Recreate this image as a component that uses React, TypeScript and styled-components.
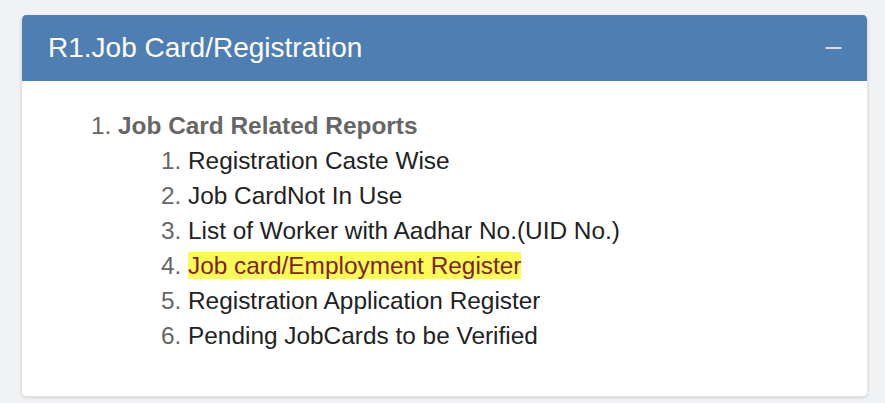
import React from 'react'
import { createGlobalStyle, styled } from 'styled-components'

const GlobalStyle = createGlobalStyle`
  html, body {
    margin: 0;
    padding: 0;
    background: #f1f2f4;
    font-family: "Liberation Sans", Arial, sans-serif;
  }
`;

const Page = styled.div`
  padding: 15px 17px 7px 21px;
`;

const Card = styled.section`
  background: #fff;
  border: 1px solid #dfe1e4;
  border-top: none;
  border-radius: 5px;
  box-shadow: 0 1px 3px rgba(0, 0, 0, 0.12);
  overflow: hidden;
`;

const Header = styled.header`
  height: 66px;
  background: #4f7eb2;
  display: flex;
  align-items: center;
  justify-content: space-between;
  padding: 0 25px 0 26px;
  color: #fff;
`;

const Title = styled.h3`
  margin: 0;
  font-size: 28px;
  font-weight: normal;
  line-height: 32px;
`;

const Collapse = styled.button`
  background: none;
  border: none;
  padding: 0;
  display: flex;
  cursor: pointer;
`;

const Body = styled.div`
  padding: 27px 0 43px;
`;

const OuterList = styled.ol`
  margin: 0;
  padding-left: 96px;
  font-size: 24.4px;
  line-height: 35px;
  color: #666;
`;

const Heading = styled.b`
  color: #666;
`;

const InnerList = styled.ol`
  margin: 0;
  padding-left: 70px;
`;

const Item = styled.li`
  &::marker {
    color: #666;
  }
`;

const ItemText = styled.span<{ $active?: boolean }>`
  color: ${p => (p.$active ? '#7d2328' : '#222')};
  background: ${p => (p.$active ? '#fbfb55' : 'transparent')};
`;

const reports = [
  'Registration Caste Wise',
  'Job CardNot In Use',
  'List of Worker with Aadhar No.(UID No.)',
  'Job card/Employment Register',
  'Registration Application Register',
  'Pending JobCards to be Verified',
];

export default function App() {
  return (
    <>
      <GlobalStyle />
      <Page>
        <Card>
          <Header>
            <Title>R1.Job Card/Registration</Title>
            <Collapse aria-label="collapse">
              <svg width="17" height="4" viewBox="0 0 17 4">
                <line x1="0.5" y1="2" x2="16.5" y2="2" stroke="#fff" strokeWidth="1.6" />
              </svg>
            </Collapse>
          </Header>
          <Body>
            <OuterList>
              <li>
                <Heading>Job Card Related Reports</Heading>
                <InnerList>
                  {reports.map((r, i) => (
                    <Item key={r}>
                      <ItemText $active={i === 3}>{r}</ItemText>
                    </Item>
                  ))}
                </InnerList>
              </li>
            </OuterList>
          </Body>
        </Card>
      </Page>
    </>
  )
}
